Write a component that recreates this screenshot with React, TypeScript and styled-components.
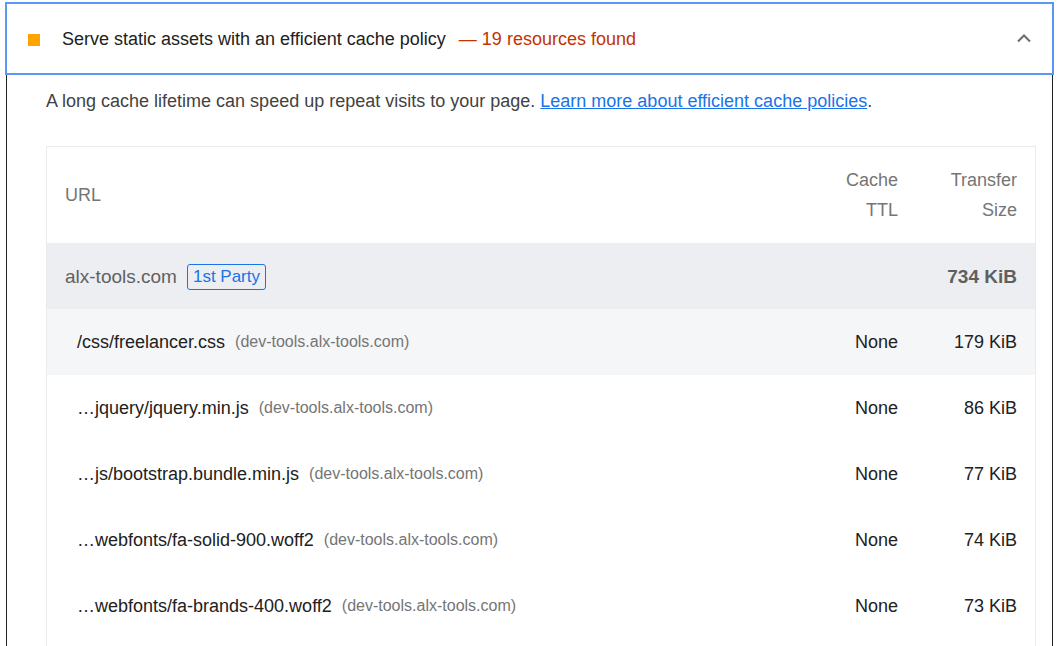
import React from "react";
import styled, { createGlobalStyle } from "styled-components";

const Global = createGlobalStyle`
  html, body { margin: 0; padding: 0; background: #ffffff; }
  body { font-family: "Liberation Sans", Arial, sans-serif; color: #212121; }
`;

const Page = styled.div`
  padding: 3px 7px 0 6px;
  height: 646px;
  box-sizing: border-box;
  overflow: hidden;
`;

const Card = styled.section`
  border: 1px solid #202124;
  border-bottom: none;
  min-height: 700px;
`;

const Summary = styled.div`
  display: flex;
  align-items: center;
  box-sizing: border-box;
  height: 69px;
  padding: 0 20px 0 21px;
  outline: 2px solid #5b97f4;
  font-size: 18px;
  line-height: 24px;
`;

const Square = styled.span`
  width: 12px;
  height: 12px;
  background: #ffa400;
  flex: none;
  margin-right: 22px;
  margin-top: 2px;
`;

const Title = styled.span`
  color: #212121;
  flex: 1;
`;

const Display = styled.span`
  color: #c33300;
  margin-left: 13px;
`;

const Chevron = styled.svg`
  width: 16px;
  height: 10px;
  flex: none;
  margin-top: -2px;
`;

const Body = styled.div`
  padding: 16px 16px 0 39px;
`;

const Description = styled.p`
  margin: 0 0 33px 0;
  font-size: 18px;
  line-height: 24px;
  color: #424242;
`;

const Link = styled.a`
  color: #1a73e8;
  text-decoration: underline;
`;

const Table = styled.div`
  border: 1px solid #ebebeb;
  border-bottom: none;
  padding-bottom: 60px;
  font-size: 18px;
`;

const Row = styled.div<{ $bg?: string }>`
  display: grid;
  grid-template-columns: 1fr 95px 119px;
  align-items: center;
  background: ${(p) => p.$bg || "#ffffff"};
`;

const Cell = styled.div<{ $right?: boolean; $indent?: boolean; $color?: string; $bold?: boolean; $size?: number; $shift?: boolean }>`
  padding: ${(p) => (p.$shift ? "19px 18px 17px" : "18px 18px 18px")};
  padding-left: ${(p) => (p.$indent ? "30px" : "18px")};
  line-height: 30px;
  font-size: ${(p) => p.$size || 18}px;
  text-align: ${(p) => (p.$right ? "right" : "left")};
  color: ${(p) => p.$color || "#212121"};
  font-weight: ${(p) => (p.$bold ? 700 : 400)};
  white-space: ${(p) => (p.$right ? "normal" : "nowrap")};
  display: flex;
  align-items: center;
  justify-content: ${(p) => (p.$right ? "flex-end" : "flex-start")};
`;

const HeadText = styled.span`
  color: #757575;
`;

const Secondary = styled.span`
  color: #757575;
  font-size: 16px;
  margin-left: 10px;
`;

const Badge = styled.span`
  display: inline-block;
  margin-left: 10px;
  border: 1px solid #1a73e8;
  border-radius: 3px;
  color: #1a73e8;
  padding: 0 5px;
  line-height: 24px;
  font-size: 17px;
`;

const rows = [
  { url: "/css/freelancer.css", size: "179 KiB" },
  { url: "…jquery/jquery.min.js", size: "86 KiB" },
  { url: "…js/bootstrap.bundle.min.js", size: "77 KiB" },
  { url: "…webfonts/fa-solid-900.woff2", size: "74 KiB" },
  { url: "…webfonts/fa-brands-400.woff2", size: "73 KiB" },
];

export default function App() {
  return (
    <>
      <Global />
      <Page>
        <Card>
          <Summary>
            <Square />
            <Title>
              Serve static assets with an efficient cache policy
              <Display>— 19 resources found</Display>
            </Title>
            <Chevron viewBox="0 0 16 10">
              <polyline points="2,8.5 8,2.5 14,8.5" fill="none" stroke="#6b6b6b" strokeWidth="2" />
            </Chevron>
          </Summary>
          <Body>
            <Description>
              A long cache lifetime can speed up repeat visits to your page.{" "}
              <Link href="#">Learn more about efficient cache policies</Link>.
            </Description>
            <Table>
              <Row>
                <Cell><HeadText>URL</HeadText></Cell>
                <Cell $right><HeadText>Cache TTL</HeadText></Cell>
                <Cell $right><HeadText>Transfer Size</HeadText></Cell>
              </Row>
              <Row $bg="#eceef1">
                <Cell $shift $color="#616161" $size={19}>
                  alx-tools.com<Badge>1st Party</Badge>
                </Cell>
                <Cell $shift $right />
                <Cell $shift $right $bold $color="#5f5f5f" $size={19}>734 KiB</Cell>
              </Row>
              {rows.map((r, i) => (
                <Row key={r.url} $bg={i === 0 ? "#f5f6f8" : "#ffffff"}>
                  <Cell $indent>
                    {r.url}
                    <Secondary>(dev-tools.alx-tools.com)</Secondary>
                  </Cell>
                  <Cell $right>None</Cell>
                  <Cell $right>{r.size}</Cell>
                </Row>
              ))}
            </Table>
          </Body>
        </Card>
      </Page>
    </>
  );
}
